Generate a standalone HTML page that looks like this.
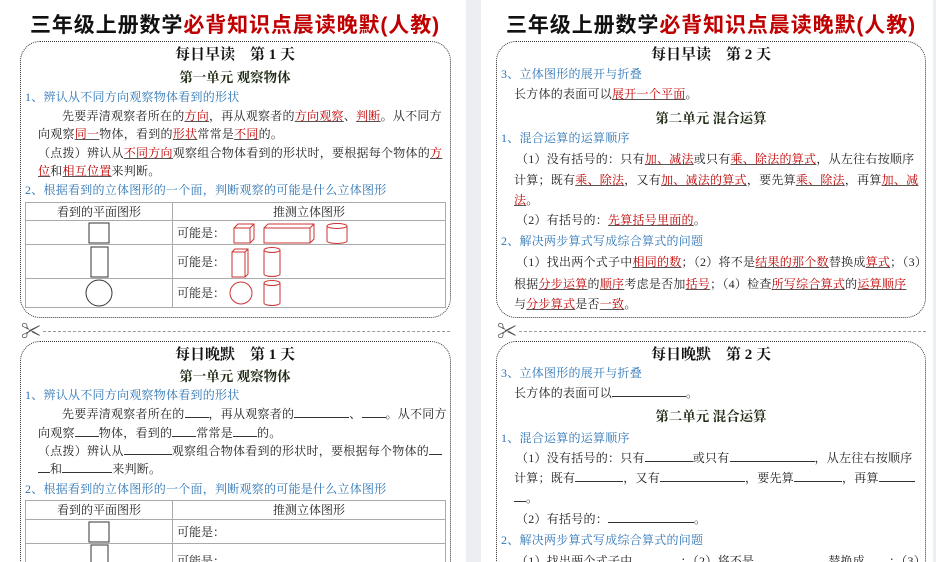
<!DOCTYPE html>
<html><head><meta charset="utf-8"><style>
*{margin:0;padding:0;box-sizing:border-box}
body{width:936px;height:562px;overflow:hidden;background:#eceef2;position:relative;font-family:"Liberation Serif","Noto Serif CJK SC",serif;color:#222}
.pg{position:absolute;top:0;height:562px;background:#fff;overflow:hidden}
.box{position:absolute;border:1.3px dotted #333;border-radius:20px}
.l{position:absolute;white-space:nowrap;font-size:12px;letter-spacing:0.25px;line-height:16px}
.t{position:absolute;white-space:nowrap;font-size:21px;font-weight:bold;font-family:"Liberation Sans","Noto Sans CJK SC",sans-serif;letter-spacing:0.9px;color:#111}
.h{position:absolute;white-space:nowrap;font-size:15px;font-weight:bold;text-align:center;color:#111}
.u{position:absolute;white-space:nowrap;font-size:13.5px;font-weight:bold;text-align:center;color:#1e2a14}
.b{color:#2e75b6}
.r{color:#c00000;text-decoration:underline;text-decoration-color:#555}
.bl{display:inline-block;border-bottom:1px solid #333;height:12px;vertical-align:baseline}
table{position:absolute;border-collapse:collapse;font-size:12px;table-layout:fixed}
td{border:1px solid #aaa;text-align:center;padding:0;line-height:14px;overflow:hidden}
td svg{display:block;margin:0 auto}
.rel{position:relative;text-align:left;padding-left:4px}
.rel svg{position:absolute;margin:0}
.sc{position:absolute;font-size:20px;color:#555;line-height:20px}
.dash{position:absolute;height:0;border-top:1px dashed #999}
</style></head><body>
<div class="pg" style="left:0;width:466px">
<div class="t" style="left:30px;top:9px">三年级上册数学<span style="color:#c00000">必背知识点晨读晚默(人教)</span></div>
<div class="box" style="left:20px;top:41px;width:431px;height:277px"></div>
<div class="h" style="left:0;width:470px;top:43px">每日早读　第 1 天</div>
<div class="u" style="left:0;width:470px;top:66px">第一单元 观察物体</div>
<div class="l b" style="left:25px;top:89px">1、辨认从不同方向观察物体看到的形状</div>
<div class="l" style="left:62px;top:108px">先要弄清观察者所在的<span class="r">方向</span>，再从观察者的<span class="r">方向观察</span>、<span class="r">判断</span>。从不同方</div>
<div class="l" style="left:38px;top:126px">向观察<span class="r">同一</span>物体，看到的<span class="r">形状</span>常常是<span class="r">不同</span>的。</div>
<div class="l" style="left:38px;top:145px">（点拨）辨认从<span class="r">不同方向</span>观察组合物体看到的形状时，要根据每个物体的<span class="r">方</span></div>
<div class="l" style="left:38px;top:163px"><span class="r">位</span>和<span class="r">相互位置</span>来判断。</div>
<div class="l b" style="left:25px;top:182px">2、根据看到的立体图形的一个面，判断观察的可能是什么立体图形</div>
<table style="left:25px;top:202px;width:421px">
<tr style="height:18px"><td style="width:147px">看到的平面图形</td><td>推测立体图形</td></tr>
<tr style="height:24px"><td><svg width="24" height="22"><rect x="2" y="1" width="20" height="20" fill="none" stroke="#333"/></svg></td><td class="rel">可能是：<svg style="left:60px;top:1px" width="130" height="22" fill="none" stroke="#c33"><path d="M1 6h16v15H1zM1 6l4-4h16v15l-4 4M17 6l4-4"/><path d="M31 6h46v15H31zM31 6l4-4h46v15l-4 4M77 6l4-4"/><ellipse cx="104" cy="4" rx="10" ry="2.5"/><path d="M94 4v15M114 4v15"/><path d="M94 19a10 2.5 0 0 0 20 0"/></svg></td></tr>
<tr style="height:34px"><td><svg width="22" height="32"><rect x="3" y="1" width="17" height="30" fill="none" stroke="#333"/></svg></td><td class="rel">可能是：<svg style="left:58px;top:1px" width="60" height="32" fill="none" stroke="#c33"><path d="M1 6h13v25H1zM1 6l3-3h13v25l-3 3M14 6l3-3"/><ellipse cx="41" cy="4" rx="8" ry="2.5"/><path d="M33 4v24M49 4v24"/><path d="M33 28a8 2.5 0 0 0 16 0"/></svg></td></tr>
<tr style="height:29px"><td><svg width="28" height="28"><circle cx="14" cy="14" r="13" fill="none" stroke="#333"/></svg></td><td class="rel">可能是：<svg style="left:56px;top:0px" width="60" height="28" fill="none" stroke="#c33"><circle cx="12" cy="14" r="11"/><ellipse cx="43" cy="4" rx="8" ry="2.5"/><path d="M35 4v20M51 4v20"/><path d="M35 24a8 2.5 0 0 0 16 0"/></svg></td></tr>
</table>
<div class="sc" style="left:21px;top:322px">✂</div>
<div class="dash" style="left:43px;top:331px;width:407px"></div>
<div class="box" style="left:20px;top:341px;width:431px;height:240px"></div>
<div class="h" style="left:0;width:470px;top:343px">每日晚默　第 1 天</div>
<div class="u" style="left:0;width:470px;top:365px">第一单元 观察物体</div>
<div class="l b" style="left:25px;top:387px">1、辨认从不同方向观察物体看到的形状</div>
<div class="l" style="left:62px;top:406px">先要弄清观察者所在的<span class="bl" style="width:24px"></span>，再从观察者的<span class="bl" style="width:55px"></span>、<span class="bl" style="width:24px"></span>。从不同方</div>
<div class="l" style="left:38px;top:425px">向观察<span class="bl" style="width:24px"></span>物体，看到的<span class="bl" style="width:24px"></span>常常是<span class="bl" style="width:24px"></span>的。</div>
<div class="l" style="left:38px;top:443px">（点拨）辨认从<span class="bl" style="width:48px"></span>观察组合物体看到的形状时，要根据每个物体的<span class="bl" style="width:13px"></span></div>
<div class="l" style="left:38px;top:461px"><span class="bl" style="width:12px"></span>和<span class="bl" style="width:50px"></span>来判断。</div>
<div class="l b" style="left:25px;top:481px">2、根据看到的立体图形的一个面，判断观察的可能是什么立体图形</div>
<table style="left:25px;top:500px;width:421px">
<tr style="height:19px"><td style="width:147px">看到的平面图形</td><td>推测立体图形</td></tr>
<tr style="height:24px"><td><svg width="24" height="22"><rect x="2" y="1" width="20" height="20" fill="none" stroke="#333"/></svg></td><td style="text-align:left;padding-left:4px">可能是：</td></tr>
<tr style="height:34px"><td style="vertical-align:top"><svg width="22" height="32"><rect x="3" y="1" width="17" height="30" fill="none" stroke="#333"/></svg></td><td style="text-align:left;padding-left:4px;vertical-align:top;padding-top:10px">可能是：</td></tr>
</table>
</div>

<div class="pg" style="left:481px;width:452px">
<div class="t" style="left:25px;top:9px">三年级上册数学<span style="color:#c00000">必背知识点晨读晚默(人教)</span></div>
<div class="box" style="left:15px;top:41px;width:430px;height:277px"></div>
<div class="h" style="left:0;width:460px;top:43px">每日早读　第 2 天</div>
<div class="l b" style="left:20px;top:66px">3、立体图形的展开与折叠</div>
<div class="l" style="left:33px;top:86px">长方体的表面可以<span class="r">展开一个平面</span>。</div>
<div class="u" style="left:0;width:460px;top:107px">第二单元 混合运算</div>
<div class="l b" style="left:20px;top:130px">1、混合运算的运算顺序</div>
<div class="l" style="left:35px;top:151px">（1）没有括号的：只有<span class="r">加、减法</span>或只有<span class="r">乘、除法的算式</span>，从左往右按顺序</div>
<div class="l" style="left:33px;top:172px">计算；既有<span class="r">乘、除法</span>，又有<span class="r">加、减法的算式</span>，要先算<span class="r">乘、除法</span>，再算<span class="r">加、减</span></div>
<div class="l" style="left:33px;top:192px"><span class="r">法</span>。</div>
<div class="l" style="left:35px;top:212px">（2）有括号的：<span class="r">先算括号里面的</span>。</div>
<div class="l b" style="left:20px;top:233px">2、解决两步算式写成综合算式的问题</div>
<div class="l" style="left:35px;top:254px">（1）找出两个式子中<span class="r">相同的数</span>；（2）将不是<span class="r">结果的那个数</span>替换成<span class="r">算式</span>；（3）</div>
<div class="l" style="left:33px;top:276px">根据<span class="r">分步运算</span>的<span class="r">顺序</span>考虑是否加<span class="r">括号</span>；（4）检查<span class="r">所写综合算式</span>的<span class="r">运算顺序</span></div>
<div class="l" style="left:33px;top:296px">与<span class="r">分步算式</span>是否<span class="r">一致</span>。</div>
<div class="sc" style="left:16px;top:322px">✂</div>
<div class="dash" style="left:38px;top:331px;width:407px"></div>
<div class="box" style="left:15px;top:341px;width:430px;height:240px"></div>
<div class="h" style="left:0;width:460px;top:343px">每日晚默　第 2 天</div>
<div class="l b" style="left:20px;top:365px">3、立体图形的展开与折叠</div>
<div class="l" style="left:33px;top:385px">长方体的表面可以<span class="bl" style="width:74px"></span>。</div>
<div class="u" style="left:0;width:460px;top:405px">第二单元 混合运算</div>
<div class="l b" style="left:20px;top:430px">1、混合运算的运算顺序</div>
<div class="l" style="left:35px;top:450px">（1）没有括号的：只有<span class="bl" style="width:48px"></span>或只有<span class="bl" style="width:85px"></span>，从左往右按顺序</div>
<div class="l" style="left:33px;top:470px">计算；既有<span class="bl" style="width:48px"></span>，又有<span class="bl" style="width:85px"></span>，要先算<span class="bl" style="width:48px"></span>，再算<span class="bl" style="width:36px"></span></div>
<div class="l" style="left:33px;top:490px"><span class="bl" style="width:12px"></span>。</div>
<div class="l" style="left:35px;top:511px">（2）有括号的：<span class="bl" style="width:86px"></span>。</div>
<div class="l b" style="left:20px;top:532px">2、解决两步算式写成综合算式的问题</div>
<div class="l" style="left:35px;top:553px">（1）找出两个式子中<span class="bl" style="width:48px"></span>；（2）将不是<span class="bl" style="width:74px"></span>替换成<span class="bl" style="width:24px"></span>；（3）</div>
</div>
</body></html>
